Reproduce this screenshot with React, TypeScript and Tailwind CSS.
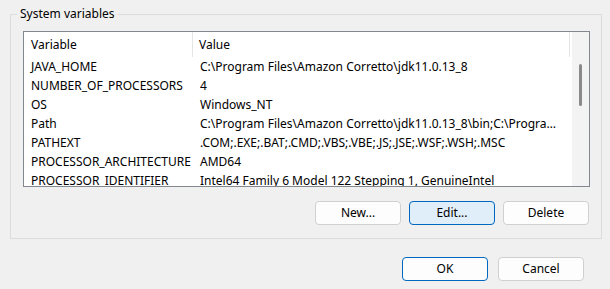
import React from 'react';

const rows: [string, string][] = [
  ['JAVA_HOME', 'C:\\Program Files\\Amazon Corretto\\jdk11.0.13_8'],
  ['NUMBER_OF_PROCESSORS', '4'],
  ['OS', 'Windows_NT'],
  ['Path', 'C:\\Program Files\\Amazon Corretto\\jdk11.0.13_8\\bin;C:\\Program Files\\Amazon Corretto\\jdk11.0.13_8\\jre\\bin'],
  ['PATHEXT', '.COM;.EXE;.BAT;.CMD;.VBS;.VBE;.JS;.JSE;.WSF;.WSH;.MSC'],
  ['PROCESSOR_ARCHITECTURE', 'AMD64'],
  ['PROCESSOR_IDENTIFIER', 'Intel64 Family 6 Model 122 Stepping 1, GenuineIntel'],
];

const Button: React.FC<{ label: string; variant?: 'normal' | 'focused' | 'default' }> = ({ label, variant = 'normal' }) => {
  const cls =
    variant === 'focused'
      ? 'bg-[#e0eef9] border-[#0067c0]'
      : variant === 'default'
      ? 'bg-[#fdfdfd] border-[#0067c0]'
      : 'bg-[#fdfdfd] border-[#d0d0d0]';
  return (
    <button className={`w-[86px] h-[24px] rounded-[4px] border text-[12px] text-black leading-none ${cls}`}>
      {label}
    </button>
  );
};

export default function App() {
  return (
    <div
      className="w-[610px] h-[289px] bg-[#f0f0f0] text-[12px] text-black overflow-hidden"
      style={{ fontFamily: '"Noto Sans", "Liberation Sans", sans-serif' }}
    >
      <div className="pt-[14px] pl-[10px]">
        <div className="relative w-[592px] h-[225px] border border-[#dcdcdc] pt-[16px] pl-[12px] pr-[11px]">
          <span className="absolute left-[6px] top-[-9px] px-[3px] bg-[#f0f0f0] leading-[16px]">System variables</span>

          <div className="w-[567px] h-[156px] border border-[#828790] bg-white flex overflow-hidden">
            <div className="flex-1 flex flex-col overflow-hidden">
              <div className="h-[25px] flex items-center shrink-0">
                <div className="w-[169px] pl-[7px] h-full flex items-center border-r border-[#e5e5e5]">Variable</div>
                <div className="w-[377px] pl-[6px] h-full flex items-center border-r border-[#e5e5e5]">Value</div>
              </div>
              {rows.map(([name, value]) => (
                <div key={name} className="h-[19px] flex items-center shrink-0 whitespace-nowrap">
                  <div className="w-[169px] pl-[7px] overflow-hidden">{name}</div>
                  <div className="w-[377px] pl-[7px] pr-[8px] overflow-hidden text-ellipsis">{value}</div>
                </div>
              ))}
            </div>
            <div className="w-[17px] bg-[#f3f3f3] shrink-0 pt-[32px] flex justify-center">
              <div className="w-[3px] h-[42px] rounded-full bg-[#8a8a8a]" />
            </div>
          </div>

          <div className="flex justify-end gap-[8px] mt-[14px] pr-[1px]">
            <Button label="New..." />
            <Button label="Edit..." variant="focused" />
            <Button label="Delete" />
          </div>
        </div>
      </div>

      <div className="flex justify-end gap-[10px] mt-[18px] pr-[26px]">
        <Button label="OK" variant="default" />
        <Button label="Cancel" />
      </div>
    </div>
  );
}
